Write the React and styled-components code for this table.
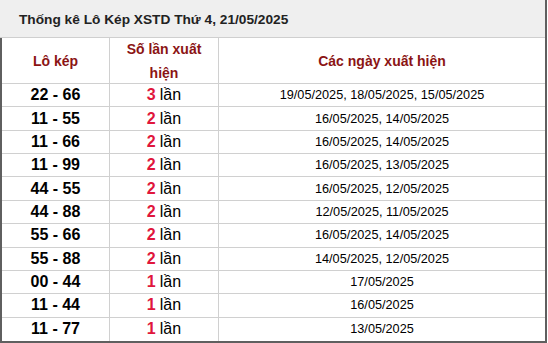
import React from "react";
import styled, { createGlobalStyle } from "styled-components";

const GlobalStyle = createGlobalStyle`
  body {
    margin: 0;
    background: #fff;
    font-family: "Liberation Sans", Arial, sans-serif;
  }
`;

const Card = styled.div`
  width: 547px;
  height: 343px;
  box-sizing: border-box;
  border-right: 2px solid #5f5f5f;
  display: flex;
  flex-direction: column;
`;

const Title = styled.div`
  height: 38px;
  flex: none;
  box-sizing: border-box;
  background: #efefef;
  border-bottom: 1px solid #cfcfcf;
  padding: 2px 0 0 19px;
  display: flex;
  align-items: center;
  font-size: 13.7px;
  font-weight: bold;
  color: #222;
`;

const Grid = styled.div`
  height: 305px;
  flex: none;
  box-sizing: border-box;
  border-left: 2px solid #5f5f5f;
  border-bottom: 2px solid #5f5f5f;
  display: grid;
  grid-template-columns: 108px 109px 1fr;
  grid-template-rows: 46px repeat(11, 1fr);
`;

const Cell = styled.div`
  box-sizing: border-box;
  display: flex;
  align-items: center;
  justify-content: center;
  text-align: center;
  border-bottom: ${(p) => (p.$last ? "none" : "1px solid #d0d0d0")};
  border-right: ${(p) => (p.$end ? "none" : "1px solid #d0d0d0")};
  color: #000;
`;

const HeadCell = styled(Cell)`
  color: #8b1414;
  font-size: 14px;
  font-weight: bold;
  line-height: 24px;
  padding: 0 10px;
`;

const Pair = styled(Cell)`
  font-size: 16px;
  font-weight: bold;
`;

const Count = styled(Cell)`
  font-size: 16px;
  & b {
    color: #e0163c;
    margin-right: 4px;
  }
`;

const Dates = styled(Cell)`
  font-size: 12.7px;
`;

const rows = [
  ["22 - 66", 3, "19/05/2025, 18/05/2025, 15/05/2025"],
  ["11 - 55", 2, "16/05/2025, 14/05/2025"],
  ["11 - 66", 2, "16/05/2025, 14/05/2025"],
  ["11 - 99", 2, "16/05/2025, 13/05/2025"],
  ["44 - 55", 2, "16/05/2025, 12/05/2025"],
  ["44 - 88", 2, "12/05/2025, 11/05/2025"],
  ["55 - 66", 2, "16/05/2025, 14/05/2025"],
  ["55 - 88", 2, "14/05/2025, 12/05/2025"],
  ["00 - 44", 1, "17/05/2025"],
  ["11 - 44", 1, "16/05/2025"],
  ["11 - 77", 1, "13/05/2025"],
];

export default function App() {
  return (
    <>
      <GlobalStyle />
      <Card>
        <Title>Thống kê Lô Kép XSTD Thứ 4, 21/05/2025</Title>
        <Grid>
          <HeadCell>Lô kép</HeadCell>
          <HeadCell>Số lần xuất hiện</HeadCell>
          <HeadCell $end>Các ngày xuất hiện</HeadCell>
          {rows.map(([pair, n, dates], i) => {
            const last = i === rows.length - 1;
            return (
              <React.Fragment key={pair}>
                <Pair $last={last}>{pair}</Pair>
                <Count $last={last}>
                  <b>{n}</b>lần
                </Count>
                <Dates $last={last} $end>
                  {dates}
                </Dates>
              </React.Fragment>
            );
          })}
        </Grid>
      </Card>
    </>
  );
}
